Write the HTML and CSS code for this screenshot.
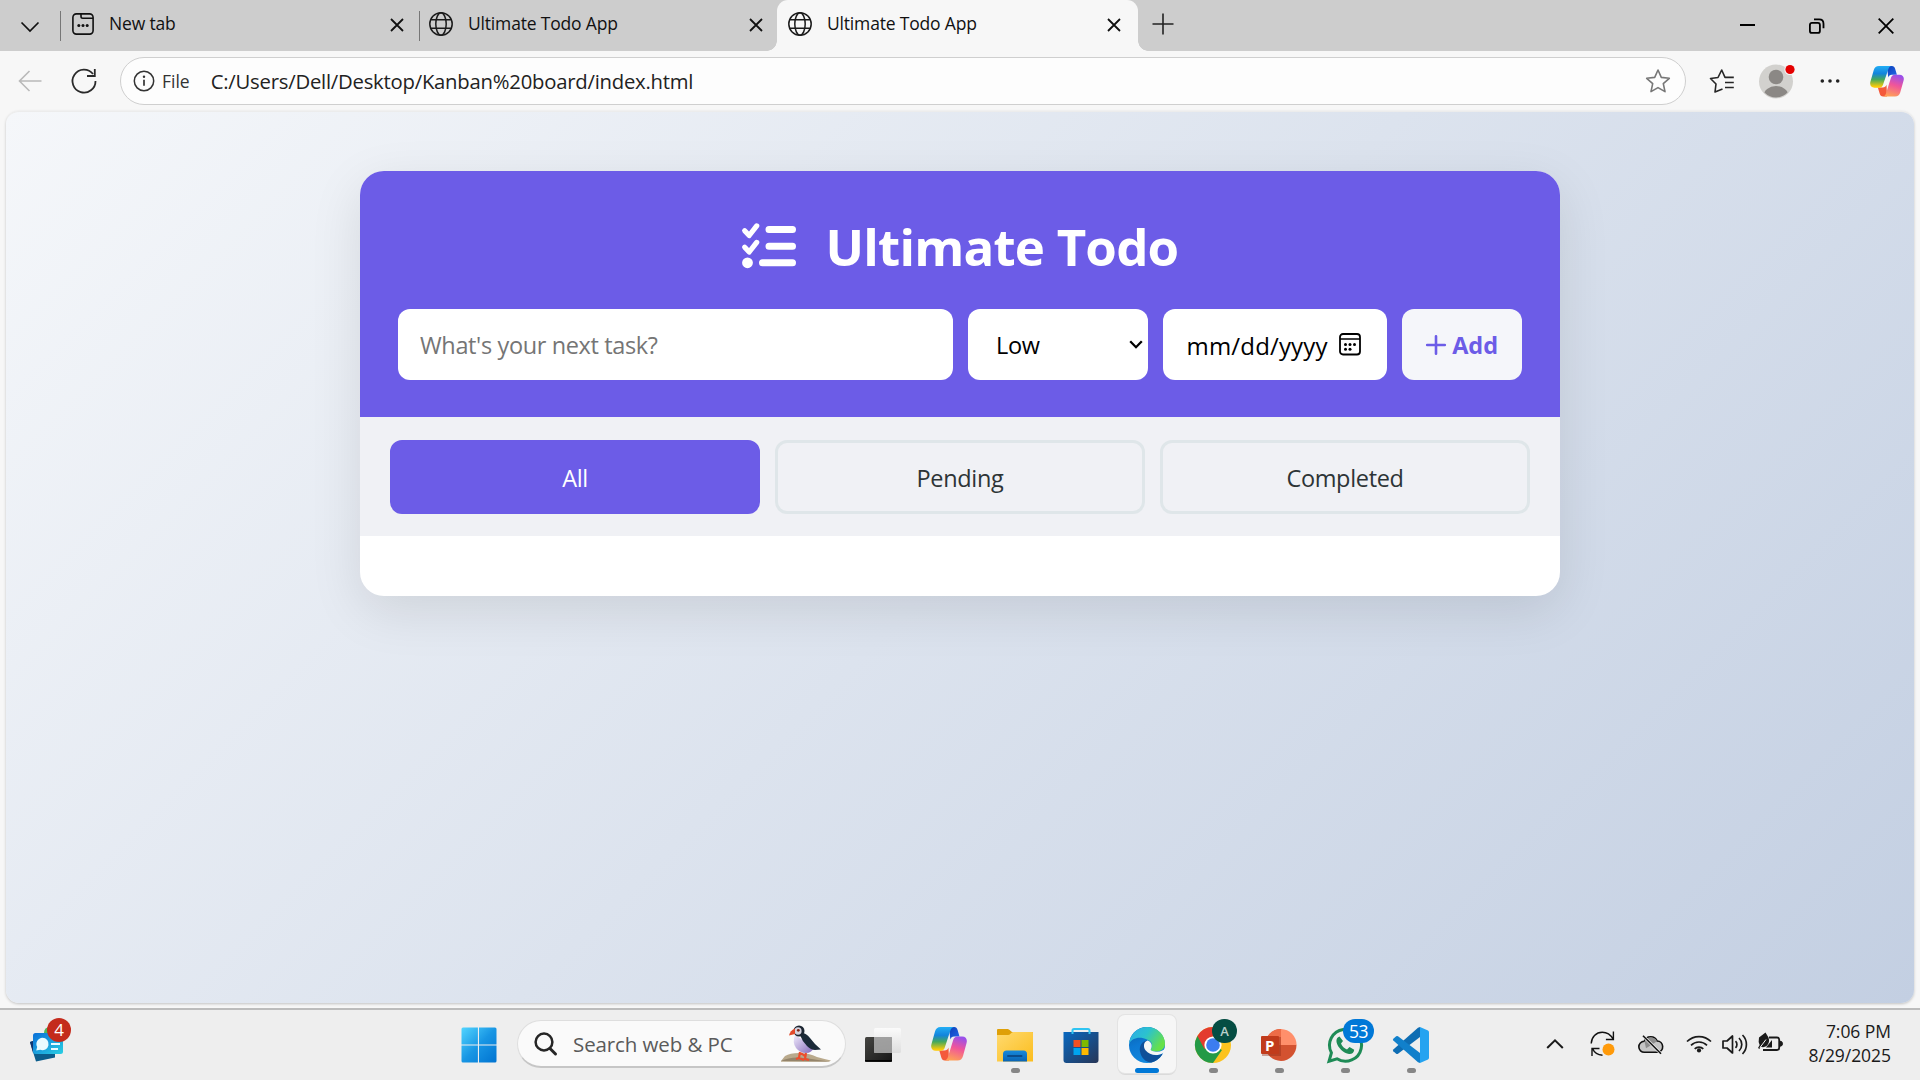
FILE: index.html
```html
<!DOCTYPE html>
<html lang="en">
<head>
<meta charset="utf-8">
<title>Ultimate Todo App</title>
<link rel="stylesheet" href="styles.css">
</head>
<body>
<svg class="defs" width="0" height="0" aria-hidden="true">
  <defs>
    <linearGradient id="cpBlue" x1="0" y1="0" x2="0" y2="1"><stop offset="0" stop-color="#22aef5"/><stop offset=".35" stop-color="#1384dc"/><stop offset=".62" stop-color="#45a85c"/><stop offset=".95" stop-color="#fccb09"/></linearGradient>
    <linearGradient id="cpPink" x1=".6" y1="0" x2=".3" y2="1"><stop offset="0" stop-color="#9a50ea"/><stop offset=".45" stop-color="#f0559a"/><stop offset="1" stop-color="#ffa355"/></linearGradient>
    <linearGradient id="cpNavy" x1="0" y1="0" x2="1" y2="1"><stop offset="0" stop-color="#0b3fb8"/><stop offset="1" stop-color="#2569ea"/></linearGradient>
    <linearGradient id="win" x1="0" y1="0" x2="1" y2="1"><stop offset="0" stop-color="#52d5ff"/><stop offset=".5" stop-color="#1896e4"/><stop offset="1" stop-color="#0073d1"/></linearGradient>
    <linearGradient id="fold" x1="0" y1="0" x2="1" y2="1"><stop offset="0" stop-color="#ffda70"/><stop offset="1" stop-color="#fbbd1d"/></linearGradient>
    <linearGradient id="foldTab" x1="0" y1="0" x2="0" y2="1"><stop offset="0" stop-color="#1689dc"/><stop offset="1" stop-color="#0a64b4"/></linearGradient>
    <linearGradient id="store" x1="0" y1="0" x2="1" y2="1"><stop offset="0" stop-color="#0868c0"/><stop offset="1" stop-color="#273657"/></linearGradient>
    <linearGradient id="edTop" x1="0" y1="0" x2="1" y2=".5"><stop offset="0" stop-color="#2ea9ea"/><stop offset=".5" stop-color="#2bc2cf"/><stop offset="1" stop-color="#66e04a"/></linearGradient>
    <linearGradient id="edLeft" x1="0" y1="0" x2=".4" y2="1"><stop offset="0" stop-color="#0a5ea8"/><stop offset=".5" stop-color="#0c78d2"/><stop offset="1" stop-color="#1388dd"/></linearGradient>
    <linearGradient id="dark" x1="0" y1="0" x2="1" y2="1"><stop offset="0" stop-color="#454542"/><stop offset="1" stop-color="#161616"/></linearGradient>
    <linearGradient id="glass" x1="0" y1="0" x2="0" y2="1"><stop offset="0" stop-color="#ffffff"/><stop offset="1" stop-color="#d9d9d9"/></linearGradient>
    <linearGradient id="widget" x1="0" y1="0" x2="1" y2="1"><stop offset="0" stop-color="#0a6fd8"/><stop offset="1" stop-color="#29cfe3"/></linearGradient>
    <linearGradient id="belly" x1="0" y1="0" x2="1" y2="1"><stop offset="0" stop-color="#efeafc"/><stop offset="1" stop-color="#8468b8"/></linearGradient>

    <symbol id="globe" viewBox="0 0 24 24"><g fill="none" stroke="#1b1b1b" stroke-width="1.5"><circle cx="12" cy="12" r="11.2"/><ellipse cx="12" cy="12" rx="5.2" ry="11.2"/><path d="M1.7 7.7h20.6M1.7 16.3h20.6"/></g></symbol>
    <symbol id="cross" viewBox="0 0 14 14"><path d="M1 1l12 12M13 1L1 13" fill="none" stroke="#111" stroke-width="1.8"/></symbol>
    <symbol id="copilot" viewBox="0 0 36 34">
      <path d="M18 0h5.200c1.800 0 2.800 1 3.400 3l1.900 6.500h-5.500c-2 0-3 1-3.700 3z" fill="url(#cpNavy)"/>
      <path d="M18 33.500h-4.200c-2 0-2.800-1-3.500-3L8.300 23.500h5.200c2 0 3.200-.8 4-3z" fill="#f4593b"/>
      <path d="M9.500 0H23c-2 .3-3 1.500-3.800 4L13.800 20.500c-.7 2.200-2 3.300-4.300 3.300H4.800C1 23.800-.6 20.800.5 17L4 4.500C4.900 1.500 6.500 0 9.500 0z" fill="url(#cpBlue)"/>
      <path d="M26.500 33.500H13.500c2-.3 2.800-1.500 3.600-4L22.200 13c.7-2.200 2-3.500 4.300-3.500h4.700c3.800 0 5.400 3 4.300 6.800L32 29c-.9 3-2.500 4.500-5.500 4.500z" fill="url(#cpPink)"/>
    </symbol>
  </defs>
</svg>

<header class="tabstrip">
  <div class="tab-search"><svg width="20" height="12" viewBox="0 0 20 12"><path d="M1.500 1.500L10 10l8.500-8.500" fill="none" stroke="#111" stroke-width="1.700"/></svg></div>
  <div class="tab tab-first">
    <svg class="fav" width="22" height="22" viewBox="0 0 22 22"><g fill="none" stroke="#111" stroke-width="1.600"><rect x=".9" y=".9" width="20.200" height="20.200" rx="3.500"/><path d="M9 1v2.500Q9 5.200 10.700 5.200H21"/></g><g fill="#111"><circle cx="6.800" cy="12.400" r="1.500"/><circle cx="11" cy="12.400" r="1.500"/><circle cx="15.200" cy="12.400" r="1.500"/></g></svg>
    <span class="tab-title">New tab</span><svg class="x" width="14" height="14"><use href="#cross"/></svg>
  </div>
  <div class="tab">
    <svg class="fav" width="24" height="24"><use href="#globe"/></svg>
    <span class="tab-title">Ultimate Todo App</span><svg class="x" width="14" height="14"><use href="#cross"/></svg>
  </div>
  <div class="tab tab-active">
    <svg class="fav" width="24" height="24"><use href="#globe"/></svg>
    <span class="tab-title">Ultimate Todo App</span><svg class="x" width="14" height="14"><use href="#cross"/></svg>
  </div>
  <svg class="new-tab" width="22" height="22" viewBox="0 0 22 22"><path d="M11 .5v21M.5 11h21" stroke="#222" stroke-width="1.600"/></svg>
  <div class="window-buttons">
    <svg width="16" height="16" viewBox="0 0 16 16"><path d="M0 7h15" stroke="#000" stroke-width="2"/></svg>
    <svg width="16" height="16" viewBox="0 0 16 16"><g fill="none" stroke="#000" stroke-width="1.800"><rect x=".9" y="4.900" width="10" height="10" rx="2"/><path d="M5 1.400h5.200q4.300 0 4.300 4.300v4.600"/></g></svg>
    <svg width="16" height="16" viewBox="0 0 16 16"><path d="M.7.7l14.600 14.600M15.300.7L.7 15.300" stroke="#000" stroke-width="1.800"/></svg>
  </div>
</header>

<nav class="toolbar">
  <svg class="back" width="24" height="22" viewBox="0 0 24 22"><path d="M23.500 11H1.500M11.500 1L1.500 11l10 10" fill="none" stroke="#b9b9b9" stroke-width="1.600"/></svg>
  <svg class="reload" width="26" height="26" viewBox="0 0 26 26"><path d="M24.500 13A11.500 11.500 0 1 1 22 6M23.800 1v7H16" fill="none" stroke="#2a2a2a" stroke-width="1.800"/></svg>
  <div class="address">
    <svg width="22" height="22" viewBox="0 0 22 22"><circle cx="11" cy="11" r="9.700" fill="none" stroke="#333" stroke-width="1.500"/><path d="M11 9.700v6" stroke="#333" stroke-width="1.700"/><circle cx="11" cy="6.700" r="1.200" fill="#333"/></svg>
    <span class="scheme">File</span>
    <span class="url">C:/Users/Dell/Desktop/Kanban%20board/index.html</span>
    <svg class="star" width="26" height="26" viewBox="0 0 26 26"><path d="M13 2l3.300 7.400 8 .9-6 5.400 1.700 7.900-7-4-7 4 1.700-7.900-6-5.400 8-.9z" fill="none" stroke="#777" stroke-width="1.600" stroke-linejoin="round"/></svg>
  </div>
  <svg class="favorites" width="26" height="26" viewBox="0 0 26 26"><path d="M13.500 21L6 24l1-8L1.500 10.500l7.500-1 3.700-7.500L16 9.400h8.800M16 14.500h8.800M16 19.500h8.800" fill="none" stroke="#262626" stroke-width="1.600" stroke-linejoin="round"/></svg>
  <svg class="avatar" width="38" height="36" viewBox="0 0 38 36"><circle cx="18" cy="18.500" r="17" fill="#d2d1ce"/><clipPath id="av"><circle cx="18" cy="18.500" r="16"/></clipPath><circle cx="18" cy="14" r="7.300" fill="#8b8885"/><ellipse cx="18" cy="33" rx="12.500" ry="10" fill="#8b8885" clip-path="url(#av)"/><circle cx="32" cy="6.500" r="5.600" fill="#f7f7f7"/><circle cx="32" cy="6.500" r="4.600" fill="#e40000"/></svg>
  <svg class="more" width="20" height="6" viewBox="0 0 20 6"><circle cx="2.300" cy="3" r="1.800"/><circle cx="10" cy="3" r="1.800"/><circle cx="17.700" cy="3" r="1.800"/></svg>
  <svg class="cp" width="34" height="31" viewBox="0 0 36 34" preserveAspectRatio="none"><use href="#copilot" width="36" height="34"/></svg>
</nav>

<main class="page">
  <section class="card">
    <div class="card-head">
      <h1>
        <svg width="54" height="46" viewBox="0 0 54 46"><g fill="none" stroke="#fff" stroke-linecap="round" stroke-linejoin="round"><path d="M2.700 7.700l4.500 4.800 7.500-9.600M2.700 24.200l4.500 4.800 7.500-9.600" stroke-width="5.200"/><path d="M27 6.600h23.500M27 23.300h23.500M20.500 39.800h30" stroke-width="7"/></g><circle cx="5.500" cy="39.800" r="5.400" fill="#fff"/></svg>
        <span>Ultimate Todo</span>
      </h1>
      <form class="entry">
        <input class="field task" type="text" placeholder="What's your next task?">
        <div class="field priority"><span>Low</span><svg width="14" height="9" viewBox="0 0 14 9"><path d="M1.200 1.300L7 7.200l5.800-5.900" fill="none" stroke="#000" stroke-width="2.300"/></svg></div>
        <div class="field due"><span>mm/dd/yyyy</span><svg width="22" height="23" viewBox="0 0 22 23"><rect x="1" y="1" width="20" height="20.500" rx="3" fill="none" stroke="#000" stroke-width="1.800"/><path d="M1 6h20" stroke="#000" stroke-width="1.500"/><g><circle cx="6.500" cy="11.500" r="1.500"/><circle cx="11" cy="11.500" r="1.500"/><circle cx="15.500" cy="11.500" r="1.500"/><circle cx="6.500" cy="16.200" r="1.500"/><circle cx="11" cy="16.200" r="1.500"/></g></svg></div>
        <button class="field add" type="button"><svg width="20" height="20" viewBox="0 0 20 20"><path d="M10 1.200v17.600M1.200 10h17.600" stroke="#6c5ce7" stroke-width="2.600" stroke-linecap="round"/></svg><span>Add</span></button>
      </form>
    </div>
    <div class="filters">
      <button class="filter filter-on" type="button">All</button>
      <button class="filter" type="button">Pending</button>
      <button class="filter" type="button">Completed</button>
    </div>
    <div class="tasks"></div>
  </section>
</main>

<footer class="taskbar">
  <div class="widgets">
    <svg width="34" height="38" viewBox="0 0 34 38"><path d="M14 8q0-6 6-6v12h-6z" fill="#4fb85c"/><path d="M0 17l3-1 3 13 19-.5v4L6 36.500z" fill="#0b5d8c"/><path d="M0 17l3-1 2 10-2 2z" fill="#12366f"/><rect x="3" y="8" width="30" height="21" rx="2.500" fill="url(#widget)"/><path d="M12.500 12.800a6.200 6.200 0 1 1-2.300 12l-4 .6 1-3.300a6.200 6.200 0 0 1 5.300-9.300z" fill="#e9fbff"/><path d="M21 19h9M21 24h7" stroke="#e9fbff" stroke-width="2"/></svg>
    <span class="badge badge-red">4</span>
  </div>
  <svg class="start" width="36" height="36" viewBox="0 0 36 36"><path d="M2 .5h14.900v16.900H.5V2Q.5.500 2 .5zM18 .5h16q1.500 0 1.500 1.500v15.400H18zM.5 18.500h16.400v17H2Q.5 35.500.5 34zM18 18.500h17.500V34q0 1.500-1.500 1.500H18z" fill="url(#win)"/></svg>
  <div class="search">
    <svg width="23" height="24" viewBox="0 0 23 24"><circle cx="10" cy="10" r="8.400" fill="none" stroke="#262626" stroke-width="2.500"/><path d="M16 16.500l5.500 5.500" stroke="#262626" stroke-width="3" stroke-linecap="round"/></svg>
    <span>Search web &amp; PC</span>
    <svg class="puffin" width="50" height="37" viewBox="0 0 50 37"><path d="M0 36l4-5q5-3 14-3 10 0 18 4 8 2 14 3.500l-2 1.200H0z" fill="#b9a98c"/><path d="M0 36q10-5 24-3t24 3.500z" fill="#94846b"/><path d="M14 10q-3 7 1 13 4 5 10 5 6 0 8-6z" fill="url(#belly)"/><path d="M21 8q4 0 8 5l5 6 6 5.500-6 .5q-4 0-8-4-5-5-7-11z" fill="#1b2a38"/><circle cx="18" cy="6" r="5.500" fill="#1d2733"/><ellipse cx="17" cy="6" rx="3.600" ry="3.800" fill="#d5d2de"/><circle cx="17.300" cy="5.300" r="1.400" fill="#7c2618"/><path d="M14 3.500q-5 2-6 7l6-1.500z" fill="#e2492b"/><path d="M19 27l-1 6-3 1M25 28l-1 6 4 1M18 33l5 2M20 28l5 4" fill="none" stroke="#ee4d2d" stroke-width="2.200"/></svg>
  </div>
  <div class="apps">
    <div class="app"><svg width="36" height="36" viewBox="0 0 36 36"><rect x="0" y="10" width="27" height="25" rx="1.500" fill="url(#dark)"/><path d="M0 33.800h27" stroke="#000" stroke-width="1.500"/><rect x="9" y="1" width="27" height="25" rx="1.500" fill="url(#glass)" opacity=".75"/><rect x="9" y="10" width="18" height="16" fill="#979797" opacity=".8"/></svg></div>
    <div class="app"><svg width="36" height="34" viewBox="0 0 36 34"><use href="#copilot" width="36" height="34"/></svg></div>
    <div class="app"><svg width="36" height="36" viewBox="0 0 36 36"><path d="M0 3q0-1 1-1h9.500q1 0 1.800.8L15 5h20q1 0 1 1v9H0z" fill="#dfa008"/><path d="M0 8h11q1.500 0 2.500-1.200T16 5h19q1 0 1 1v28.500H0z" fill="url(#fold)"/><path d="M6 34.500V27q0-3.500 3.500-3.500h17Q30 23.500 30 27v7.500z" fill="url(#foldTab)"/><path d="M11 29h13.500" stroke="#0a4c8c" stroke-width="2" stroke-linecap="round"/></svg><i class="run"></i></div>
    <div class="app"><svg width="36" height="36" viewBox="0 0 36 36"><path d="M.5 5h35v28q0 3-3 3h-29q-3 0-3-3z" fill="url(#store)"/><path d="M9.500 7V3.500Q9.500 2 11 2h14q1.500 0 1.500 1.500V7" fill="none" stroke="#2fc4f2" stroke-width="2"/><path d="M10.500 13h7v7h-7z" fill="#f25022"/><path d="M18.500 13h7v7h-7z" fill="#7fba00"/><path d="M10.500 21h7v7h-7z" fill="#00a4ef"/><path d="M18.500 21h7v7h-7z" fill="#ffb900"/></svg></div>
    <div class="app app-current"><svg width="36" height="36" viewBox="0 0 36 36"><circle cx="18" cy="18" r="18" fill="url(#edLeft)"/><path d="M18 13.500C13 14 10 19 11 24.500 12.200 31 17 35.600 22.500 35.400 28 34 32 30.500 33.500 26.600c-7 3.500-13.500.5-15-4-.8-2.600-.3-4.600 1-6.400z" fill="#0f4f99"/><path d="M0 17C1 7 8.500 0 18 0c10 0 18 7.500 18 16.500 0 5.500-4.200 8-9 8-4 0-6-1-5-2.500 2.500-4 .5-8-4-9.500C11 9 3 10.500 0 17z" fill="url(#edTop)"/><path d="M18.500 13.500c-4 1.200-4.500 6.500-2 9.800 3.800 5 11.500 6.200 17.500 3l2-1.300V21c-1.500 2.800-5 4-9 3.700-4-.2-6-1.200-5-2.900 1.800-3.300.2-7.300-3.500-8.300z" fill="#f6f6f6"/></svg><i class="run run-current"></i></div>
    <div class="app"><svg width="36" height="36" viewBox="0 0 36 36"><circle cx="18" cy="18" r="18" fill="#fcc31e"/><path d="M18 18L2.400 9A18 18 0 0 0 18 36l9-13z" fill="#249a46"/><path d="M2.400 9A18 18 0 0 1 33.600 9H18l-8.500 13z" fill="#e33b2e"/><circle cx="18" cy="18" r="8.600" fill="#fff"/><circle cx="18" cy="18" r="6.800" fill="#3c7df0"/></svg><span class="badge badge-profile">A</span><i class="run"></i></div>
    <div class="app"><svg width="36" height="36" viewBox="0 0 36 36"><path d="M20 2a16 16 0 0 0 0 32 16 16 0 0 0 15.500-16z" fill="#d35230"/><path d="M20 2v16H4A16 16 0 0 1 20 2z" fill="#ed6c47"/><path d="M20 2a16 16 0 0 1 15.500 16H20z" fill="#ff8f6b"/><rect x="1" y="10" width="19" height="19" fill="#8f2a16" opacity=".4"/><rect x="0" y="9" width="18" height="18" rx="1" fill="#c13b1b"/></svg><b class="ppt">P</b><i class="run"></i></div>
    <div class="app"><svg width="36" height="36" viewBox="0 0 36 36"><path d="M2 34.300l2.400-8.500A16 16 0 1 1 10 31.800z" fill="none" stroke="#1e8b56" stroke-width="3"/><path d="M12.500 9.500c-2 .5-3.500 2.500-3 5.500C10.500 20.500 17 26.500 22 27c3 .2 5-1.200 5.200-4.200L22.500 20l-2.500 2.500c-2.500-.8-5-3.300-6-6l2-2.500z" fill="#1e8b56"/></svg><span class="badge badge-blue">53</span><i class="run"></i></div>
    <div class="app"><svg width="36" height="36" viewBox="0 0 36 36"><path d="M.3 22.500Q-.5 23.500.3 24.300l2.900 2.500q.9.600 1.800 0L27 10V0l-2 .8z" fill="#0e6db3"/><path d="M.3 13.500Q-.5 12.500.3 11.700l2.900-2.500q.9-.6 1.800 0L27 26v10l-2-.8z" fill="#1180cb"/><path d="M27 0l8 3.500q1 .6 1 1.700v25.600q0 1.200-1 1.700L27 36z" fill="#25a3f0"/></svg><i class="run"></i></div>
  </div>
  <div class="tray">
    <svg class="t-chevron" width="18" height="10" viewBox="0 0 18 10"><path d="M1.200 9L9 1.300 16.800 9" fill="none" stroke="#1a1a1a" stroke-width="2"/></svg>
    <svg class="t-sync" width="26" height="26" viewBox="0 0 26 26"><path d="M1.200 12.500C1.500 6 6 1.200 12.300 1.200c5 0 8.500 2.800 10.700 6.800M23.400.5v8h-7.500M9.500 17.500H2V25M2.500 17.500c1.500 3.500 5 6.500 10 6.800" fill="none" stroke="#111" stroke-width="1.400"/><circle cx="18.500" cy="18.500" r="6" fill="#ff9a0a"/></svg>
    <svg class="t-cloud" width="26" height="20" viewBox="0 0 26 20"><path d="M6.500 17.300a5.500 5.500 0 0 1-.3-11 7 7 0 0 1 13-.3 5.700 5.700 0 0 1 .8 11.300z" fill="#c5c5c5" stroke="#111" stroke-width="1.600"/><path d="M6.500 6.500a7 7 0 0 1 12.500-.3l-3 2-8 5z" fill="#8d8d8d"/><path d="M5 .8l18 18" stroke="#eee" stroke-width="3"/><path d="M5 .8l18 18" stroke="#111" stroke-width="1.600"/></svg>
    <svg class="t-wifi" width="26" height="19" viewBox="0 0 26 19"><g fill="none" stroke="#1a1a1a" stroke-width="1.700"><path d="M1 7.500a17 17 0 0 1 24 0M5 11.300a11.300 11.300 0 0 1 16 0M8.700 14.800a6.100 6.100 0 0 1 8.600 0"/></g><circle cx="13" cy="16.400" r="2.100" fill="#1a1a1a"/></svg>
    <svg class="t-volume" width="26" height="21" viewBox="0 0 26 21"><path d="M1 7h4l5.500-5v17L5 14H1zM13.500 7.200a4.500 4.500 0 0 1 0 6.600M17 4a9 9 0 0 1 0 13M20.500 1a13.500 13.500 0 0 1 0 19" fill="none" stroke="#1a1a1a" stroke-width="1.700" stroke-linejoin="round"/></svg>
    <svg class="t-battery" width="26" height="21" viewBox="0 0 26 21"><path d="M11 5.500h8q2.200 0 2.200 2.200v8q0 2.300-2.200 2.300H5" fill="none" stroke="#1a1a1a" stroke-width="1.800"/><path d="M22 9.200q2.500 0 2.500 2.500t-2.500 2.500z" fill="#1a1a1a" stroke="#1a1a1a"/><path d="M14 8v7.500H8z" fill="#1a1a1a"/><path d="M1 5.500L7.500.5l3 5q1.800 5-2 8.500-3 2-6 .5L1.500 17 0 16l1.700-3Q0 10 1 5.500z" fill="#1a1a1a"/><path d="M2 15.500l6-8" stroke="#eee" stroke-width="1"/></svg>
    <div class="clock"><span class="time">7:06 PM</span><span class="date">8/29/2025</span></div>
  </div>
</footer>
</body>
</html>
```
FILE: styles.css
```css
* { box-sizing: border-box; }

body {
  margin: 0;
  width: 1920px;
  height: 1080px;
  overflow: hidden;
  display: flex;
  flex-direction: column;
  background: #f7f7f7;
  font-family: "Open Sans", "Noto Sans", sans-serif;
  color: #111;
}

svg { display: block; flex: none; overflow: visible; }
.defs { position: absolute; }
input, button { font-family: inherit; border: 0; margin: 0; padding: 0; }

/* Tab strip */
.tabstrip {
  height: 51px;
  flex: none;
  display: flex;
  background: #cdcdcd;
  font-size: 17.5px;
  letter-spacing: -0.18px;
}
.tab-search { width: 60px; padding: 21px 0 0 20px; }
.tab {
  position: relative;
  display: flex;
  align-items: flex-start;
  width: 359px;
  padding: 12px 15px 0 10px;
}
.tab-first { padding-left: 12px; }
.tab-first .fav { margin-top: 1px; }
.tab-first .tab-title { margin-left: 15px; }
.tab:not(.tab-active)::before {
  content: "";
  position: absolute;
  left: 0;
  top: 11px;
  width: 1px;
  height: 30px;
  background: #777;
}
.tab-title { margin-left: 15px; line-height: 23px; white-space: nowrap; }
.x { margin: 6px 0 0 auto; }
.tab-active {
  width: 361px;
  margin-left: -1px;
  padding: 12px 17px 0 11px;
  background: #f7f7f7;
  border-radius: 11px 11px 0 0;
}
.tab-active::before,
.tab-active::after {
  content: "";
  position: absolute;
  bottom: 0;
  width: 10px;
  height: 10px;
}
.tab-active::before { left: -10px; background: radial-gradient(circle at 0 0, transparent 9.5px, #f7f7f7 10px); }
.tab-active::after { right: -10px; background: radial-gradient(circle at 100% 0, transparent 9.5px, #f7f7f7 10px); }
.new-tab { margin: 13px 0 0 14px; }
.window-buttons { display: flex; gap: 53px; margin: 18px 26px 0 auto; }

/* Toolbar */
.toolbar { height: 60px; flex: none; display: flex; align-items: center; padding-left: 18px; }
.reload { margin-left: 29px; }
.address {
  width: 1566px;
  height: 48px;
  margin-left: 23px;
  padding: 0 14px 0 12px;
  display: flex;
  align-items: center;
  border: 1.5px solid #cfcfcf;
  border-radius: 24px;
  background: #fdfdfd;
}
.scheme { margin-left: 7px; font-size: 17.5px; font-weight: 500; color: #333; }
.url { margin-left: 21px; font-size: 20.3px; letter-spacing: -0.23px; color: #222; }
.star { margin-left: auto; }
.favorites { margin-left: 23px; }
.avatar { margin-left: 23px; }
.more { margin-left: 24px; fill: #222; }
.cp { margin-left: 30px; }

/* Page */
.page {
  width: 1908px;
  height: 892px;
  flex: none;
  margin: 0 0 0 6px;
  padding-top: 60px;
  border-top: 1px solid #ececec;
  border-radius: 13px;
  background: linear-gradient(135deg, #f5f7fa 0%, #c3cfe2 100%);
  box-shadow: 0 1px 3px rgba(0, 0, 0, 0.22);
  overflow: hidden;
}
.card {
  width: 1200px;
  height: 425px;
  margin: -1px auto 0;
  border-radius: 24px;
  background: #fff;
  box-shadow: 0 15px 52px rgba(0, 0, 0, 0.1);
}
.card-head {
  height: 246px;
  padding: 41px 38px 0;
  border-radius: 24px 24px 0 0;
  background: #6c5ce7;
  color: #fff;
}
.card-head h1 {
  display: flex;
  align-items: center;
  justify-content: center;
  height: 68px;
  margin: 0 0 29px;
  font-size: 51px;
  letter-spacing: -0.8px;
  font-weight: 700;
}
.card-head h1 svg { margin: 0 30px 0 0; }
.entry { display: flex; gap: 15px; }
.field {
  display: flex;
  align-items: center;
  height: 71px;
  border-radius: 12px;
  background: #fff;
  color: #000;
  font-size: 23.5px;
}
.task { width: 556px; padding: 0 22px; letter-spacing: -0.36px; }
.task::placeholder { color: #757575; opacity: 1; }
.priority { width: 180px; padding: 0 5px 0 28px; justify-content: space-between; letter-spacing: -0.3px; }
.due { width: 225px; padding: 0 26px 0 24px; justify-content: space-between; font-size: 24px; letter-spacing: 0.15px; }
.due span { padding-top: 2px; }
.due svg { margin-top: -1px; }
.add { width: 120px; justify-content: center; gap: 6px; background: #f5f6fa; color: #6c5ce7; font-weight: 700; }

.filters { display: flex; gap: 15px; height: 119px; padding: 23px 30px 0; background: #f0f1f5; }
.filter {
  flex: 1;
  height: 74px;
  padding-top: 2px;
  border: 3px solid #dfe6e9;
  border-radius: 12px;
  background: transparent;
  color: #2d3436;
  font-size: 23.5px;
  letter-spacing: -0.33px;
}
.filter-on { border-color: #6c5ce7; background: #6c5ce7; color: #fff; }

/* Taskbar */
.taskbar {
  height: 72px;
  flex: none;
  margin-top: 5px;
  display: flex;
  border-top: 2px solid #bcbcbc;
  background: #eee;
}
.widgets { position: relative; width: 431px; padding: 15px 0 0 30px; }
.badge {
  position: absolute;
  display: flex;
  align-items: center;
  justify-content: center;
  height: 24px;
  border-radius: 12px;
  color: #fff;
  font-size: 17px;
  line-height: 24px;
}
.badge-red { left: 47px; top: 8px; width: 24px; background: #c42b1c; }
.start { margin: 17px 0 0 30px; }
.search {
  width: 329px;
  height: 48px;
  margin: 10px 0 0 20px;
  padding: 0 14px 0 16px;
  display: flex;
  align-items: center;
  border: 1.5px solid #dedede;
  border-bottom: 2px solid #c6c6c6;
  border-radius: 24px;
  background: #fafafa;
  color: #5a5a5a;
  font-size: 20.5px;
}
.search span { margin-left: 16px; white-space: nowrap; letter-spacing: -0.1px; }
.puffin { margin-left: auto; }
.apps { display: flex; margin-left: 4px; }
.app { position: relative; width: 58px; height: 58px; margin: 5px 4px 0; padding: 11px; }
.app > svg { margin-top: 1px; }
.app-current {
  border-radius: 7px;
  background: #f6f6f6;
  box-shadow: 0 0 0 1px #e3e3e3, 0 2px 0 #dadada;
}
.run {
  position: absolute;
  left: 24.5px;
  top: 53px;
  width: 9px;
  height: 5px;
  border-radius: 2.5px;
  background: #868686;
}
.run-current { left: 17px; width: 24px; background: #0078d7; }
.badge-profile { left: 28px; top: 4px; width: 25px; background: #054d43; color: #b9d0cb; font-size: 13px; font-weight: 600; }
.badge-blue { left: 27px; top: 4px; width: 31px; background: #0078d7; letter-spacing: -0.5px; font-size: 17.5px; }
.ppt { position: absolute; left: 15px; top: 20px; font-size: 15px; line-height: 20px; color: #fff; }

.tray { display: flex; align-items: flex-start; margin-left: auto; padding-right: 29px; }
.tray svg { margin-top: 24px; }
.tray .t-chevron { margin-top: 29px; }
.tray .t-sync { margin: 21px 0 0 26px; }
.tray .t-cloud { margin: 25px 0 0 22px; }
.tray .t-wifi { margin-left: 22px; }
.tray .t-volume { margin-left: 10px; }
.tray .t-battery { margin: 22px 0 0 10px; }
.clock {
  width: 107px;
  padding-top: 9px;
  display: flex;
  flex-direction: column;
  align-items: flex-end;
  font-size: 17.5px;
  line-height: 24px;
  letter-spacing: -0.05px;
  color: #1a1a1a;
}
```
